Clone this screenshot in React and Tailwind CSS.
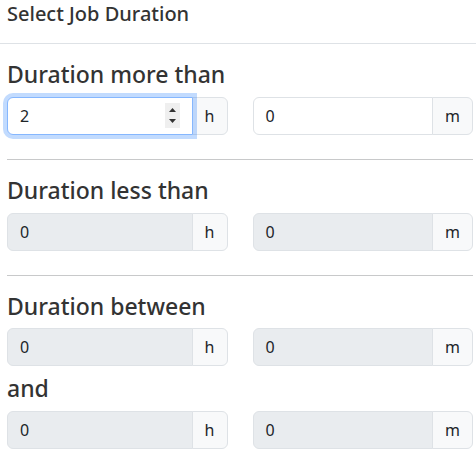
import React from 'react';

const font = { fontFamily: '"Noto Sans", "Open Sans", sans-serif' };

const Spinner = () => (
  <div className="absolute right-[12px] top-[5px] w-[15px] h-[25px] bg-[#efefef] flex flex-col items-center justify-center gap-[7px]">
    <svg width="7" height="4" viewBox="0 0 7 4">
      <path d="M0 4 L3.5 0 L7 4 Z" fill="#333" />
    </svg>
    <svg width="7" height="4" viewBox="0 0 7 4">
      <path d="M0 0 L3.5 4 L7 0 Z" fill="#333" />
    </svg>
  </div>
);

const TimeInput = ({ value, unit, disabled, focused }) => (
  <div className="flex items-stretch h-[38px]">
    <div
      className={
        'relative flex-1 min-w-0 flex items-center px-3 rounded-l-[6px] border text-[16px] text-[#212529] ' +
        (focused
          ? 'z-10 bg-white border-[#86b7fe] shadow-[0_0_0_4px_rgba(13,110,253,0.25)]'
          : disabled
          ? 'bg-[#e9ecef] border-[#dee2e6]'
          : 'bg-white border-[#dee2e6]')
      }
    >
      {value}
      {focused && <Spinner />}
    </div>
    <div className="-ml-px flex items-center px-3 rounded-r-[6px] border border-[#dee2e6] bg-[#f8f9fa] text-[16px] text-[#212529]">
      {unit}
    </div>
  </div>
);

const Row = ({ h, m, disabled, focused }) => (
  <div className="grid grid-cols-2 gap-x-[25px] mb-2">
    <TimeInput value={h} unit="h" disabled={disabled} focused={focused} />
    <TimeInput value={m} unit="m" disabled={disabled} />
  </div>
);

const Heading = ({ children }) => (
  <h4 className="text-[23px] font-medium leading-[28.8px] text-[#333] mb-2">{children}</h4>
);

const Divider = () => <hr className="my-4 border-t border-[#c8c9ca]" />;

export default function App() {
  return (
    <div className="w-[476px] h-[452px] bg-white overflow-hidden" style={font}>
      <div className="pb-4 border-b border-[#dee2e6] px-[7px]">
        <h5 className="text-[20px] font-medium leading-[27px] text-[#333]">Select Job Duration</h5>
      </div>
      <div className="pt-4 pl-[7px] pr-[3px] flex flex-col">
        <Heading>Duration more than</Heading>
        <Row h="2" m="0" focused />
        <Divider />
        <Heading>Duration less than</Heading>
        <Row h="0" m="0" disabled />
        <Divider />
        <Heading>Duration between</Heading>
        <Row h="0" m="0" disabled />
        <Heading>and</Heading>
        <Row h="0" m="0" disabled />
      </div>
    </div>
  );
}
